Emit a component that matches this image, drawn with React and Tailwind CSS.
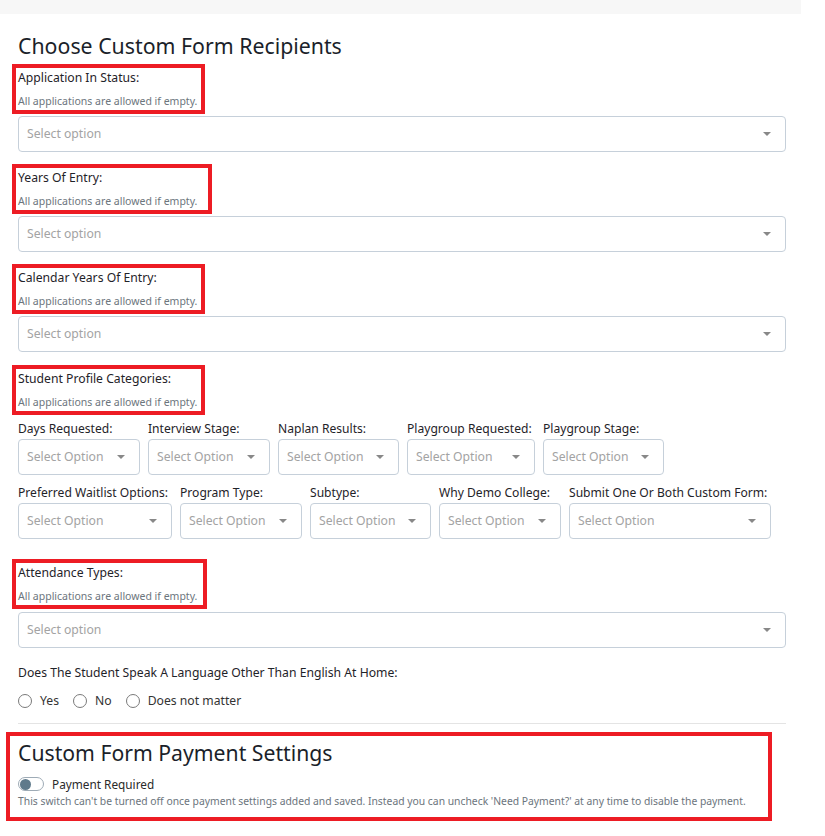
import React from "react";

const font = { fontFamily: '"Noto Sans", "Open Sans", sans-serif' };

const Caret = () => (
  <span className="absolute right-[14px] top-1/2 -translate-y-1/2 h-0 w-0 border-x-[4px] border-t-[4px] border-x-transparent border-t-[#888888]" />
);

const SelectBox = ({ placeholder = "Select option" }) => (
  <div className="relative flex h-[36px] w-full items-center rounded-[4px] border border-[#c6d0da] bg-white pl-[8px]">
    <span className="text-[12.2px] text-[#a3a3a3]">{placeholder}</span>
    <Caret />
  </div>
);

// red annotation box drawn over the label group
const Marked = ({ label, width }) => (
  <div className="relative">
    <div className="text-[12.2px] leading-[18px] text-[#1f2329]">{label}</div>
    <div className="mt-[7px] text-[10.5px] leading-[14px] text-[#6c757d]">All applications are allowed if empty.</div>
    <span className={"pointer-events-none absolute -left-[6px] -top-[5px] -bottom-[6px] border-[4px] border-[#ed1c24] " + width} />
  </div>
);

const SmallField = ({ label, width }) => (
  <div className={"flex flex-col " + width}>
    <div className="whitespace-nowrap text-[12.1px] leading-[16px] text-[#1f2329]">{label}</div>
    <div className="mt-[2px]">
      <SelectBox placeholder="Select Option" />
    </div>
  </div>
);

const Radio = ({ label }) => (
  <label className="flex items-center gap-[8px]">
    <span className="h-[14px] w-[14px] rounded-full border border-[#7a7a7a] bg-white" />
    <span className="text-[12.2px] text-[#333]">{label}</span>
  </label>
);

export default function App() {
  return (
    <div className="min-h-[836px] w-[825px] bg-white" style={font}>
      <div className="h-[14px] w-[801px] bg-[#f7f7f7]" />
      <div className="w-[804px] pl-[18px] pr-[18px]">
        <h2 className="mt-[18px] text-[21.3px] leading-[28px] font-normal text-[#1b1f2a]">Choose Custom Form Recipients</h2>

        <div className="mt-[9px]">
          <Marked label="Application In Status:" width="w-[193px]" />
          <div className="mt-[8px]"><SelectBox /></div>
        </div>

        <div className="mt-[17px]">
          <Marked label="Years Of Entry:" width="w-[200px]" />
          <div className="mt-[8px]"><SelectBox /></div>
        </div>

        <div className="mt-[17px]">
          <Marked label="Calendar Years Of Entry:" width="w-[193px]" />
          <div className="mt-[8px]"><SelectBox /></div>
        </div>

        <div className="mt-[18px]">
          <Marked label="Student Profile Categories:" width="w-[193px]" />
        </div>

        <div className="mt-[12px] flex gap-[8px]">
          <SmallField label="Days Requested:" width="w-[122px]" />
          <SmallField label="Interview Stage:" width="w-[122px]" />
          <SmallField label="Naplan Results:" width="w-[121px]" />
          <SmallField label="Playgroup Requested:" width="w-[128px]" />
          <SmallField label="Playgroup Stage:" width="w-[121px]" />
        </div>

        <div className="mt-[10px] flex gap-[8px]">
          <SmallField label="Preferred Waitlist Options:" width="w-[154px]" />
          <SmallField label="Program Type:" width="w-[122px]" />
          <SmallField label="Subtype:" width="w-[121px]" />
          <SmallField label="Why Demo College:" width="w-[122px]" />
          <SmallField label="Submit One Or Both Custom Form:" width="w-[202px]" />
        </div>

        <div className="mt-[25px]">
          <Marked label="Attendance Types:" width="w-[195px]" />
          <div className="mt-[9px]"><SelectBox /></div>
        </div>

        <div className="mt-[16px] text-[12.2px] leading-[18px] text-[#1f2329]">
          Does The Student Speak A Language Other Than English At Home:
        </div>
        <div className="mt-[10px] flex items-center gap-[14px]">
          <Radio label="Yes" />
          <Radio label="No" />
          <Radio label="Does not matter" />
        </div>

        <hr className="mt-[13px] border-t border-[#e4e4e4]" />

        <div className="relative mt-[15px] pb-[13px]">
          <h2 className="text-[21.2px] leading-[28px] font-normal text-[#1b1f2a]">Custom Form Payment Settings</h2>
          <div className="mt-[8px] flex items-center gap-[8px]">
            <span className="flex h-[14px] w-[26px] items-center rounded-full border border-[#9eabb6] bg-white px-[1px]">
              <span className="h-[11px] w-[11px] rounded-full bg-[#5f7a8b]" />
            </span>
            <span className="text-[11.8px] leading-[18px] text-[#2a2a2a]">Payment Required</span>
          </div>
          <div className="mt-[1px] whitespace-nowrap text-[10.35px] leading-[14px] text-[#6c757d]">
            This switch can't be turned off once payment settings added and saved. Instead you can uncheck 'Need Payment?' at any time to disable the payment.
          </div>
          <span className="pointer-events-none absolute -left-[12px] -top-[7px] bottom-[0px] w-[766px] border-[4px] border-[#ed1c24]" />
        </div>
      </div>
    </div>
  );
}
